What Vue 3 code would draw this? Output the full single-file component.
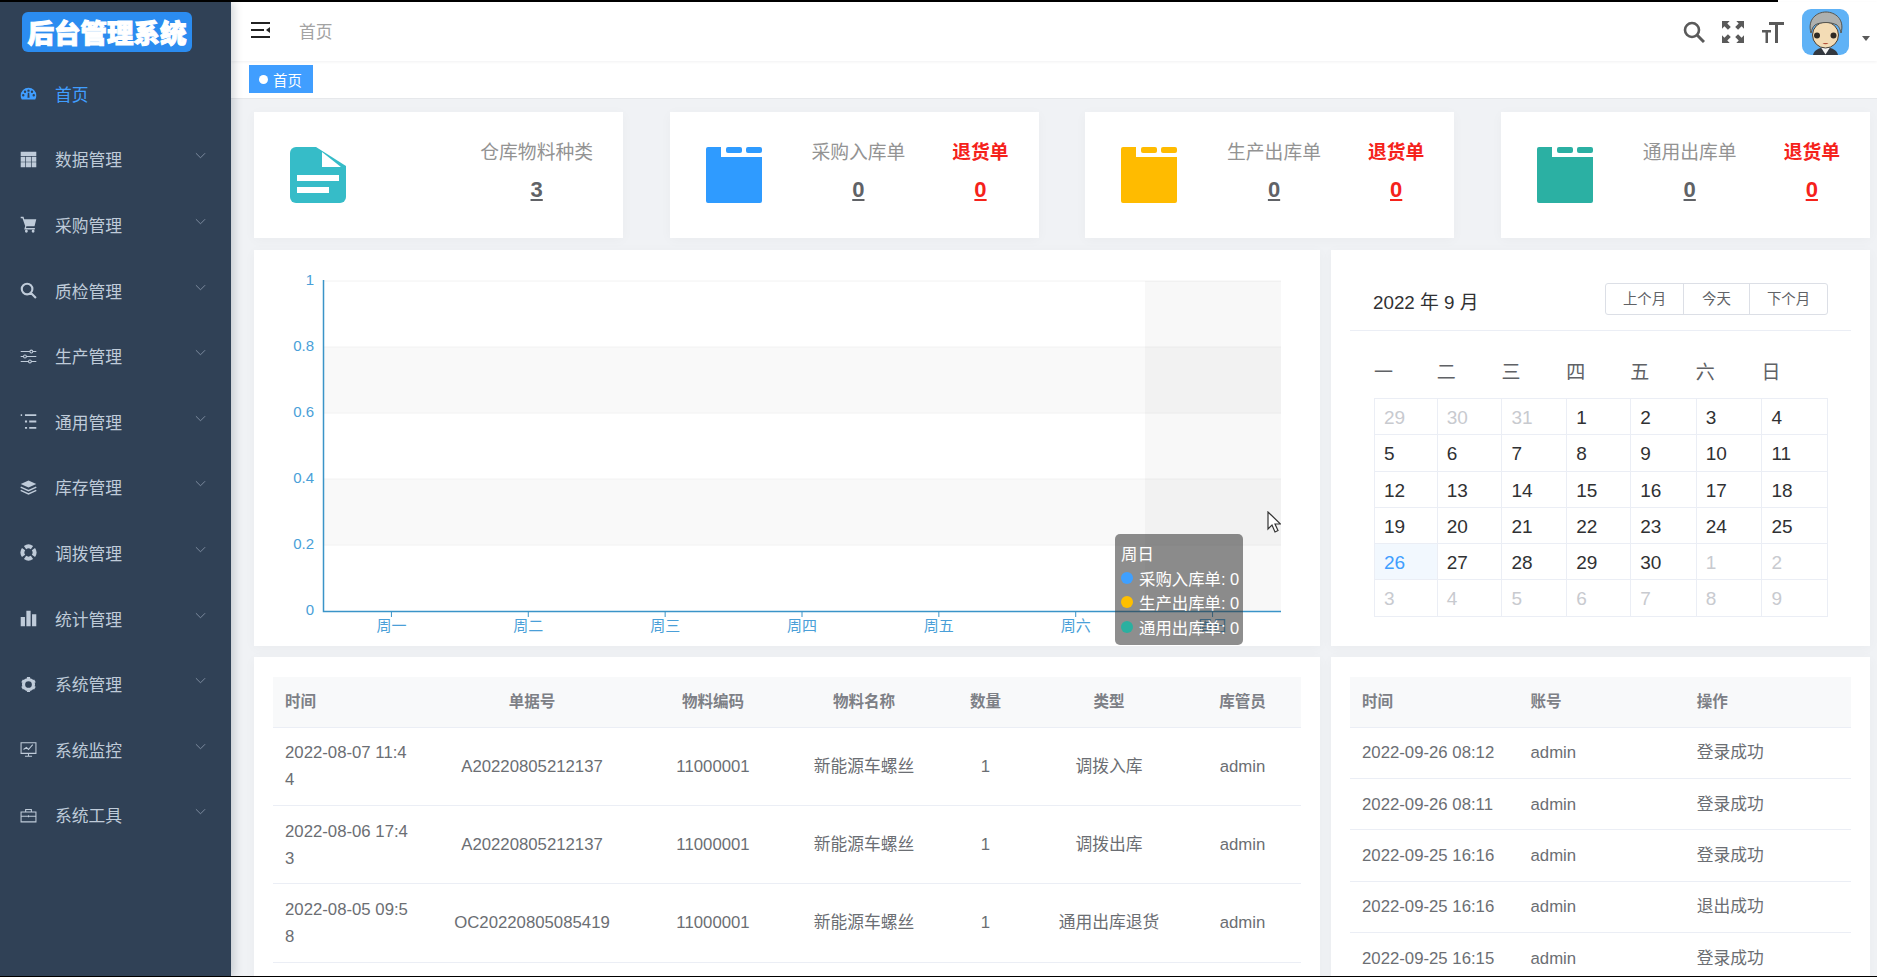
<script setup>
// sidebar icons live in a 24x24 box, "f" = filled shapes, "s" = stroked lines
const menus = [
  { name: '首页', active: true, f: 'M12 4A11 11 0 0 0 1 15c0 2 .5 3.800 1.500 5.400h19C22.500 18.800 23 17 23 15A11 11 0 0 0 12 4zM6.300 14.500a1.700 1.700 0 1 1-3.400 0 1.700 1.700 0 0 1 3.400 0zM8.800 9.500a1.700 1.700 0 1 1-3.400 0 1.700 1.700 0 0 1 3.400 0zM13.700 8a1.700 1.700 0 1 1-3.400 0 1.700 1.700 0 0 1 3.400 0zM18.600 9.500a1.700 1.700 0 1 1-3.400 0 1.700 1.700 0 0 1 3.400 0zM21.100 14.500a1.700 1.700 0 1 1-3.400 0 1.700 1.700 0 0 1 3.400 0zM11 11h2l.5 7h-3z' },
  { name: '数据管理', f: 'M1 1h22v6H1zM1 8h6.500v7H1zM8.500 8h7v7h-7zM16.500 8H23v7h-6.500zM1 16h6.500v7H1zM8.500 16h7v7h-7zM16.500 16H23v7h-6.500z' },
  { name: '采购管理', f: 'M1 1h4l1 3.500h17l-2.500 10H9l-.5 2.500H21v2H6l1.300-5L3.500 3H1zM9 19.500a2 2 0 1 1 0 4 2 2 0 0 1 0-4zM18.500 19.500a2 2 0 1 1 0 4 2 2 0 0 1 0-4z' },
  { name: '质检管理', s: 'M10 2.500a7.500 7.500 0 1 0 0 15 7.500 7.500 0 1 0 0-15zM15.500 15.500L22.500 22.500', w: 3 },
  { name: '生产管理', s: 'M1 5h13M18 5h5M16 3a2 2 0 1 0 0 4 2 2 0 1 0 0-4zM1 12h4M9 12h14M7 10a2 2 0 1 0 0 4 2 2 0 1 0 0-4zM1 19h11M16 19h7M14 17a2 2 0 1 0 0 4 2 2 0 1 0 0-4z', w: 1.500 },
  { name: '通用管理', s: 'M1 3h2M7 3h16M7 12h3M13 12h10M7 21h3M13 21h10', w: 2.500 },
  { name: '库存管理', f: 'M12 2L23 7l-11 5L1 7z', s: 'M1 11.500l11 5 11-5M1 16l11 5 11-5', w: 2 },
  { name: '调拨管理', s: 'M18.960 7.120A8.500 8.500 0 0 1 18.960 16.880M16.880 18.960A8.500 8.500 0 0 1 7.120 18.960M5.040 16.880A8.500 8.500 0 0 1 5.040 7.120M7.120 5.040A8.500 8.500 0 0 1 16.880 5.040', w: 5.500 },
  { name: '统计管理', f: 'M1 10h6v13H1zM9 1h6v22H9zM17 6h6v17h-6z' },
  { name: '系统管理', s: 'M12 5a7 7 0 1 0 0 14 7 7 0 1 0 0-14zM12 1.500v4M12 18.500v4M2.900 6.750l3.460 2M17.640 15.250l3.460 2M2.900 17.250l3.460-2M17.640 8.750l3.460-2', w: 4.500 },
  { name: '系统监控', s: 'M1.500 2.500h21v15h-21zM12 17.500v4M7 21.500h10M5 12l4-3 3 3 6-7', w: 1.500 },
  { name: '系统工具', s: 'M1.500 7h21v14h-21zM8 7V3.500h8V7M1.500 13h21M12 11.500v3', w: 1.500 }
]

const stats = [
  { title: '采购入库单', value: 0, color: '#2f9bff' },
  { title: '生产出库单', value: 0, color: '#ffbb00' },
  { title: '通用出库单', value: 0, color: '#2bb0a3' }
]

const yTicks = [
  { label: '1', y: 31 },
  { label: '0.8', y: 97 },
  { label: '0.6', y: 163 },
  { label: '0.4', y: 229 },
  { label: '0.2', y: 295 },
  { label: '0', y: 361 }
]
const days = ['周一', '周二', '周三', '周四', '周五', '周六', '周日']
const catWidth = 958 / 7

const tipRows = [
  { name: '采购入库单', color: '#3fa0ff' },
  { name: '生产出库单', color: '#ffbf00' },
  { name: '通用出库单', color: '#2bb0a0' }
]

const weekNames = ['一', '二', '三', '四', '五', '六', '日']

// 2022-09 as shown, starting from Monday Aug 29
const calendar = []
for (let i = 29; i <= 31; i++) calendar.push({ d: i, other: true })
for (let i = 1; i <= 30; i++) calendar.push({ d: i, today: i === 26 })
for (let i = 1; i <= 9; i++) calendar.push({ d: i, other: true })

const stockRows = [
  { time: '2022-08-07 11:44', no: 'A20220805212137', code: '11000001', name: '新能源车螺丝', qty: 1, type: '调拨入库', user: 'admin' },
  { time: '2022-08-06 17:43', no: 'A20220805212137', code: '11000001', name: '新能源车螺丝', qty: 1, type: '调拨出库', user: 'admin' },
  { time: '2022-08-05 09:58', no: 'OC20220805085419', code: '11000001', name: '新能源车螺丝', qty: 1, type: '通用出库退货', user: 'admin' }
]

const logRows = [
  { time: '2022-09-26 08:12', user: 'admin', action: '登录成功' },
  { time: '2022-09-26 08:11', user: 'admin', action: '登录成功' },
  { time: '2022-09-25 16:16', user: 'admin', action: '登录成功' },
  { time: '2022-09-25 16:16', user: 'admin', action: '退出成功' },
  { time: '2022-09-25 16:15', user: 'admin', action: '登录成功' }
]
</script>

<template>
  <div class="screen">
    <aside class="sidebar">
      <div class="logo">后台管理系统</div>
      <div
        v-for="item in menus"
        :key="item.name"
        class="menu-item"
        :class="{ active: item.active }"
      >
        <svg class="menu-icon" viewBox="0 0 24 24">
          <path v-if="item.f" :d="item.f" fill="currentColor" fill-rule="evenodd" />
          <path v-if="item.s" :d="item.s" fill="none" stroke="currentColor" :stroke-width="item.w" />
        </svg>
        <span>{{ item.name }}</span>
        <svg v-if="!item.active" class="chevron" viewBox="0 0 12 7">
          <path d="M1 1l5 5 5-5" fill="none" stroke="currentColor" stroke-width="1" />
        </svg>
      </div>
    </aside>

    <main class="main">
      <header class="topbar">
        <svg class="hamburger" viewBox="0 0 20 16">
          <path d="M0 1h19M0 8h13M0 15h19" stroke="#222" stroke-width="2" fill="none" />
          <path d="M19 5v6l-4-3z" fill="#222" />
        </svg>
        <span class="crumb">首页</span>
        <div class="top-tools">
          <svg class="tool" viewBox="0 0 22 22">
            <circle cx="9" cy="9" r="7" fill="none" stroke="#5a5a5a" stroke-width="2.600" />
            <path d="M14 14l7 7" stroke="#5a5a5a" stroke-width="3" />
          </svg>
          <svg class="tool" viewBox="1 1 20 20" fill="#5a5a5a">
            <path d="M1 1h7L5.800 3.200 9 6.400 6.400 9 3.200 5.800 1 8zM21 1v7l-2.200-2.200L15.600 9 13 6.400l3.200-3.200L14 1zM1 21v-7l2.200 2.200L6.400 13 9 15.600l-3.200 3.200L8 21zM21 21h-7l2.200-2.200L13 15.600l2.600-2.600 3.200 3.200L21 14z" />
          </svg>
          <svg class="tool" viewBox="0 0 22 22" fill="#5a5a5a">
            <path d="M7 1h15v3h-6v18h-3V4H7zM0 9h9v2.500H6V22H3.500V11.500H0z" />
          </svg>
          <svg class="avatar" viewBox="0 0 47 46">
            <rect width="47" height="46" rx="9" fill="#5fb2f6" />
            <path d="M11 46c1-5 6-7.500 12.500-7.500S35 41 36 46z" fill="#33383f" />
            <path d="M19 38.500l4.500 7 4.500-7z" fill="#f4f4f4" />
            <ellipse cx="23.500" cy="26" rx="13" ry="13" fill="#f3dcb5" stroke="#4a4036" stroke-width="1" />
            <path d="M9 24C5 10 15 3 24 3s19 7 15 21c-1-5-3-7-4-8-3-1.500-7-2.500-11-2.500S15 14.500 13 16c-2 1.500-3 4-4 8z" fill="#aeb0ae" stroke="#55554f" stroke-width="1" />
            <circle cx="15" cy="26.500" r="3" fill="#2f2a24" />
            <circle cx="31.500" cy="26.500" r="3" fill="#2f2a24" />
            <path d="M20.500 34c2 1.800 4 1.800 6 0z" fill="#b5533c" />
          </svg>
          <span class="caret"></span>
        </div>
      </header>

      <div class="tags">
        <span class="tag"><i class="tag-dot"></i>首页</span>
      </div>

      <div class="content">
        <section class="stat-row">
          <div class="card stat-card">
            <svg class="stat-icon" viewBox="0 0 56 56">
              <path d="M6 0h20l30 19v31a6 6 0 0 1-6 6H6a6 6 0 0 1-6-6V6a6 6 0 0 1 6-6z" fill="#36bcc8" />
              <path d="M32 5v15h19zM7 28h42v6H7zM7 40h32v6H7z" fill="#fff" />
            </svg>
            <div class="stat-list">
              <div class="stat">
                <div class="stat-label">仓库物料种类</div>
                <div class="stat-value">3</div>
              </div>
            </div>
          </div>

          <div v-for="s in stats" :key="s.title" class="card stat-card">
            <svg class="stat-icon" viewBox="0 0 56 56" :fill="s.color">
              <path d="M2 0h13v10h41v44a2 2 0 0 1-2 2H2a2 2 0 0 1-2-2V2a2 2 0 0 1 2-2z" />
              <rect x="20" width="16" height="6" rx="2" />
              <rect x="40" width="16" height="6" rx="2" />
            </svg>
            <div class="stat-list">
              <div class="stat">
                <div class="stat-label">{{ s.title }}</div>
                <div class="stat-value">{{ s.value }}</div>
              </div>
              <div class="stat back">
                <div class="stat-label">退货单</div>
                <div class="stat-value">0</div>
              </div>
            </div>
          </div>
        </section>

        <section class="two-cols chart-row">
          <div class="card chart-card">
            <svg class="chart" viewBox="0 0 1066 396">
              <rect x="70" y="97" width="957" height="66" fill="#f9f9f9" />
              <rect x="70" y="229" width="957" height="66" fill="#f9f9f9" />
              <line
                v-for="t in yTicks.slice(0, 5)"
                :key="t.label"
                x1="70"
                x2="1027"
                :y1="t.y"
                :y2="t.y"
                stroke="#f2f2f2"
              />
              <rect x="891" y="31" width="136" height="330" fill="rgba(150,150,150,0.07)" />
              <path d="M69.500 30v331.500H1027" fill="none" stroke="#3a94c8" stroke-width="1.500" />
              <text
                v-for="t in yTicks"
                :key="t.label"
                class="axis-text"
                x="60"
                :y="t.y + 4"
                text-anchor="end"
              >{{ t.label }}</text>
              <g v-for="(d, i) in days" :key="d">
                <line
                  :x1="69 + catWidth * (i + 0.5)"
                  :x2="69 + catWidth * (i + 0.5)"
                  y1="361"
                  y2="367"
                  stroke="#3a94c8"
                />
                <text class="axis-text" :x="69 + catWidth * (i + 0.5)" y="381" text-anchor="middle">{{ d }}</text>
              </g>
            </svg>
            <div class="tooltip">
              <div class="tip-line">周日</div>
              <div v-for="r in tipRows" :key="r.name" class="tip-line">
                <i class="tip-dot" :style="{ background: r.color }"></i>{{ r.name }}: 0
              </div>
            </div>
            <svg class="cursor" viewBox="0 0 14 22">
              <path d="M1 1v17l4-4 3 7 3-1.500-3-6.500h5.500z" fill="#fff" stroke="#333" stroke-width="1.200" />
            </svg>
          </div>

          <div class="card calendar-card">
            <div class="cal-head">
              <span class="cal-title">2022 年 9 月</span>
              <div class="cal-btns">
                <span class="cal-btn prev">上个月</span>
                <span class="cal-btn now">今天</span>
                <span class="cal-btn next">下个月</span>
              </div>
            </div>
            <div class="cal-body">
              <div class="cal-week">
                <span v-for="w in weekNames" :key="w">{{ w }}</span>
              </div>
              <div class="cal-grid">
                <div
                  v-for="(c, i) in calendar"
                  :key="i"
                  class="cal-cell"
                  :class="{ other: c.other, today: c.today }"
                >{{ c.d }}</div>
              </div>
            </div>
          </div>
        </section>

        <section class="two-cols table-row">
          <div class="card table-card">
            <table class="data-table stock">
              <thead>
                <tr>
                  <th class="left">时间</th>
                  <th>单据号</th>
                  <th>物料编码</th>
                  <th>物料名称</th>
                  <th>数量</th>
                  <th>类型</th>
                  <th>库管员</th>
                </tr>
              </thead>
              <tbody>
                <tr v-for="(r, i) in stockRows" :key="i">
                  <td class="left">{{ r.time }}</td>
                  <td>{{ r.no }}</td>
                  <td>{{ r.code }}</td>
                  <td>{{ r.name }}</td>
                  <td>{{ r.qty }}</td>
                  <td>{{ r.type }}</td>
                  <td>{{ r.user }}</td>
                </tr>
              </tbody>
            </table>
          </div>

          <div class="card table-card">
            <table class="data-table logs">
              <thead>
                <tr>
                  <th class="left">时间</th>
                  <th class="left">账号</th>
                  <th class="left">操作</th>
                </tr>
              </thead>
              <tbody>
                <tr v-for="(r, i) in logRows" :key="i">
                  <td class="left">{{ r.time }}</td>
                  <td class="left">{{ r.user }}</td>
                  <td class="left">{{ r.action }}</td>
                </tr>
              </tbody>
            </table>
          </div>
        </section>
      </div>
    </main>
  </div>
</template>

<style>
html,
body {
  margin: 0;
  overflow: hidden;
  background: #fff;
}
</style>

<style scoped>
.screen {
  position: relative;
  display: flex;
  height: 977px;
  box-sizing: border-box;
  padding-top: 2px;
  overflow: hidden;
  font-family: "Liberation Sans", "Noto Sans CJK SC", sans-serif;
  font-size: 16.76px;
  color: #606266;
}

/* black edges of the recording */
.screen::before {
  content: "";
  position: absolute;
  top: 0;
  left: 0;
  width: 1778px;
  height: 2px;
  background: #000;
  z-index: 5;
}

.screen::after {
  content: "";
  position: absolute;
  left: 0;
  right: 0;
  bottom: 0;
  height: 1px;
  background: #000;
  z-index: 5;
}

.sidebar {
  width: 231px;
  flex-shrink: 0;
  background: #304156;
  box-shadow: 3px 0 9px rgba(0, 21, 41, 0.18);
  position: relative;
  z-index: 2;
}

.logo {
  height: 40px;
  margin: 10px 39px 9px 22px;
  border-radius: 6px;
  background: #2b8cf0;
  color: #fff;
  font-family: "Noto Sans CJK SC", sans-serif;
  font-size: 26.500px;
  font-weight: 900;
  line-height: 40px;
  text-align: center;
  -webkit-text-stroke: 1px #fff;
}

.menu-item {
  display: flex;
  align-items: center;
  height: 65.600px;
  padding: 0 25px 0 20px;
  color: #bfcbd9;
}

.menu-item.active {
  color: #409eff;
}

.menu-icon {
  width: 17px;
  height: 17px;
  margin-right: 18px;
}

.chevron {
  width: 11px;
  height: 7px;
  margin-left: auto;
  margin-bottom: 7px;
  color: #8392a5;
}

.main {
  flex: 1;
  min-width: 0;
  display: flex;
  flex-direction: column;
}

.topbar {
  display: flex;
  align-items: center;
  height: 59px;
  flex-shrink: 0;
  padding-left: 20px;
  box-shadow: 0 1px 3px rgba(0, 21, 41, 0.06);
}

.hamburger {
  width: 20px;
  height: 16px;
  margin-bottom: 3px;
}

.crumb {
  margin: 0 0 2px 28px;
  color: #a3a3a3;
}

.top-tools {
  display: flex;
  align-items: center;
  margin-left: auto;
  padding-right: 7px;
}

.tool {
  width: 22px;
  height: 22px;
  margin-right: 17.500px;
}

.tool:last-of-type {
  margin-right: 17px;
}

.avatar {
  width: 47px;
  height: 46px;
  margin-left: 1px;
}

.caret {
  align-self: flex-end;
  width: 0;
  height: 0;
  margin: 0 0 14px 13px;
  border: 4px solid transparent;
  border-top: 5px solid #5a5a5a;
  border-bottom: 0;
}

.tags {
  height: 38px;
  flex-shrink: 0;
  box-sizing: border-box;
  padding: 4px 0 0 18px;
  border-bottom: 1px solid #e6e8eb;
}

.tag {
  display: inline-flex;
  align-items: center;
  width: 64px;
  height: 28px;
  box-sizing: border-box;
  padding-left: 10px;
  background: #409eff;
  color: #fff;
  font-size: 14.400px;
}

.tag-dot {
  width: 9px;
  height: 9px;
  margin-right: 5px;
  border-radius: 50%;
  background: #fff;
}

.content {
  flex: 1;
  min-height: 0;
  overflow: hidden;
  padding: 13px 7px 0 23px;
  background: #f0f2f5;
}

.card {
  background: #fff;
  box-shadow: 0 2px 12px rgba(0, 0, 0, 0.03);
}

.stat-row {
  display: grid;
  grid-template-columns: repeat(4, 369px);
  justify-content: space-between;
  height: 126px;
  margin-bottom: 12px;
}

.stat-card {
  display: flex;
  align-items: center;
  padding: 0 30px 0 36px;
}

.stat-icon {
  width: 56px;
  height: 56px;
}

.stat-list {
  display: flex;
  align-self: flex-start;
  gap: 47px;
  margin-left: auto;
  padding-top: 29px;
}

.stat {
  text-align: center;
}

.stat-label {
  font-size: 18.800px;
  line-height: 24px;
  color: #939393;
}

.stat-value {
  margin-top: 13px;
  font-size: 22px;
  font-weight: 700;
  line-height: 24px;
  color: #606266;
  text-decoration: underline;
}

.back .stat-label,
.back .stat-value {
  color: #f5221b;
  font-weight: 700;
}

.two-cols {
  display: grid;
  grid-template-columns: 1066px 539px;
  gap: 11px;
}

.chart-row {
  height: 396px;
  margin-bottom: 11px;
}

.chart-card {
  position: relative;
}

.chart {
  display: block;
  width: 1066px;
  height: 396px;
}

.axis-text {
  font-size: 15px;
  fill: #4a9fd8;
}

.tooltip {
  position: absolute;
  left: 861px;
  top: 284px;
  width: 128px;
  height: 111px;
  box-sizing: border-box;
  padding: 7px 0 7px 6px;
  border-radius: 5px;
  background: rgba(50, 50, 50, 0.55);
  color: #fff;
  font-size: 16.400px;
  white-space: nowrap;
}

.tip-line {
  display: flex;
  align-items: center;
  height: 24.500px;
}

.tip-dot {
  flex-shrink: 0;
  width: 12px;
  height: 12px;
  margin-right: 6px;
  border-radius: 50%;
}

.cursor {
  position: absolute;
  left: 1013px;
  top: 261px;
  width: 14px;
  height: 22px;
}

.calendar-card {
  padding: 0 19px;
}

.cal-head {
  display: flex;
  align-items: center;
  justify-content: space-between;
  height: 81px;
  box-sizing: border-box;
  padding: 19px 23px 0 23px;
  border-bottom: 1px solid #ebeef5;
  color: #303133;
}

.cal-title {
  font-size: 18.800px;
  padding-top: 1px;
}

.cal-btns {
  display: flex;
  height: 32px;
  margin-bottom: 2px;
  box-sizing: border-box;
  border: 1px solid #dcdfe6;
  border-radius: 3px;
  font-size: 14.400px;
  line-height: 30px;
  text-align: center;
  color: #606266;
}

.cal-btn.prev {
  width: 77px;
}

.cal-btn.now {
  width: 65px;
  border-left: 1px solid #dcdfe6;
  border-right: 1px solid #dcdfe6;
}

.cal-btn.next {
  width: 77px;
}

.cal-body {
  padding: 24px 23px 0 24px;
}

.cal-week {
  display: grid;
  grid-template-columns: 62.800px 64.600px 64.800px 64px 65.600px 65.600px 66.100px;
  height: 36px;
  margin-bottom: 7px;
  font-size: 19px;
  line-height: 36px;
  color: #606266;
}

.cal-grid {
  display: grid;
  grid-template-columns: 62.800px 64.600px 64.800px 64px 65.600px 65.600px 66.100px;
  grid-auto-rows: 36.300px;
  border-top: 1px solid #ebeef5;
  border-left: 1px solid #ebeef5;
}

.cal-cell {
  box-sizing: border-box;
  padding-left: 9px;
  border-right: 1px solid #ebeef5;
  border-bottom: 1px solid #ebeef5;
  font-size: 19px;
  line-height: 37px;
  color: #303133;
}

.cal-cell.other {
  color: #c8cacf;
}

.cal-cell.today {
  background: #f2f8fe;
  color: #409eff;
}

.table-card {
  height: 400px;
  box-sizing: border-box;
  padding: 20px 19px 0;
  overflow: hidden;
}

.data-table {
  width: 100%;
  table-layout: fixed;
  border-collapse: collapse;
}

.data-table th {
  height: 50px;
  box-sizing: border-box;
  padding: 0 12px 3px;
  background: #f8f9fa;
  border-bottom: 1px solid #ebeef5;
  font-size: 15.560px;
  font-weight: 700;
  color: #7d8086;
  text-align: center;
}

.data-table td {
  padding: 11.700px 12px;
  border-bottom: 1px solid #ebeef5;
  line-height: 27px;
  word-break: break-all;
  text-align: center;
  color: #6b6e73;
}

.data-table .left {
  text-align: left;
}

.stock th:nth-child(1) { width: 150px; }
.stock th:nth-child(2) { width: 218px; }
.stock th:nth-child(3) { width: 144px; }
.stock th:nth-child(4) { width: 158px; }
.stock th:nth-child(5) { width: 85px; }
.stock th:nth-child(6) { width: 160px; }

.stock th:nth-child(6),
.stock td:nth-child(6) {
  padding-left: 14px;
}

.stock th:nth-child(7),
.stock td:nth-child(7) {
  padding-right: 16px;
}

.logs th:nth-child(1) { width: 168.500px; }
</style>
